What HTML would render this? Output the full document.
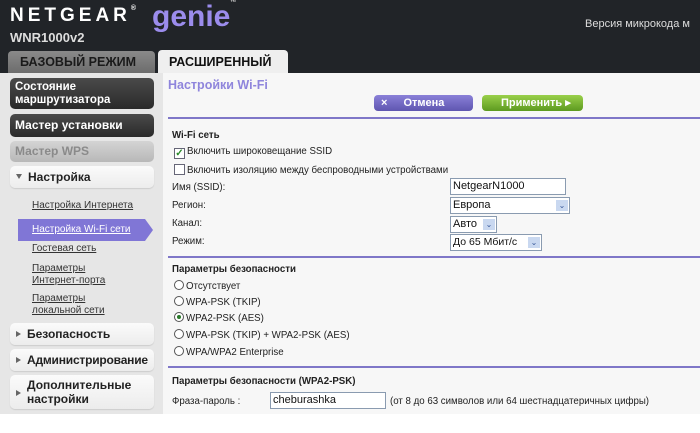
<!DOCTYPE html>
<html><head><meta charset="utf-8"><style>
*{margin:0;padding:0;box-sizing:border-box}
body{width:700px;height:433px;overflow:hidden;background:#fff;font-family:"Liberation Sans",Arial,sans-serif;position:relative}
.a{position:absolute;white-space:nowrap}
#hdr{left:0;top:0;width:700px;height:73px;background:#212428}
.sb{left:0;top:73px;width:163px;height:341px;background:#e6e6e6}
.main{left:163px;top:73px;width:537px;height:341px;background:#f7f7f7}
.db{background:linear-gradient(#4a4a4a,#2a2a2a);color:#fff;font-weight:bold;font-size:12px;border-radius:5px;left:10px;width:144px;padding-left:5px}
.lb{background:linear-gradient(#fbfbfb,#ececec);border-radius:5px;left:10px;width:144px;color:#222;font-weight:bold;font-size:12px;padding-left:6px;box-shadow:0 1px 1px #ccc}
.lk{left:32px;font-size:10px;color:#333;text-decoration:underline;line-height:12px}
.f{font-size:9.7px;color:#222}
.pl{height:2px;background:#7f77c8;left:168px;width:532px}
.inp{background:#fff;border:1px solid #8a9bb0;font-size:11px;padding-left:2px;color:#111}
.dd{position:absolute;right:1px;top:2px;width:12px;height:11px;background:#c9d8f0;color:#3a5a9a;font-size:8px;text-align:center;line-height:11px}
.rad{display:inline-block;width:10px;height:10px;border:1px solid #555;border-radius:50%;vertical-align:-1px;margin-right:2px;background:#fff;position:relative}
.tri{display:inline-block;width:0;height:0;border-left:5px solid #666;border-top:3px solid transparent;border-bottom:3px solid transparent;margin-right:6px;vertical-align:1px}
</style></head><body>
<div class="a" id="hdr"></div>
<div class="a" style="left:10px;top:5px;color:#fff;font-weight:bold;font-size:19px;letter-spacing:4px">NETGEAR<span style="font-size:7px;vertical-align:top;letter-spacing:0">®</span></div>
<div class="a" style="left:152px;top:0px;color:#9b8cec;font-weight:bold;font-size:30px">genie<span style="font-size:6px;vertical-align:top;color:#ccc">™</span></div>
<div class="a" style="left:10px;top:30px;color:#ddd;font-weight:bold;font-size:13px">WNR1000v2</div>
<div class="a" style="left:585px;top:18px;color:#ddd;font-size:11px">Версия микрокода м</div>
<div class="a" style="left:8px;top:51px;width:147px;height:22px;background:linear-gradient(#8a8a8a,#6c6c6c);border-radius:4px 4px 0 0;color:#1a1a1a;font-weight:bold;font-size:12.5px;padding:4px 0 0 12px">БАЗОВЫЙ РЕЖИМ</div>
<div class="a" style="left:158px;top:50px;width:130px;height:23px;background:#efefef;border-radius:4px 4px 0 0;color:#111;font-weight:bold;font-size:12.5px;padding:5px 0 0 11px">РАСШИРЕННЫЙ</div>
<div class="a sb"></div>
<div class="a main"></div>
<div class="a db" style="top:78px;height:31px;line-height:13px;padding-top:3px;font-size:11.5px">Состояние<br>маршрутизатора</div>
<div class="a db" style="top:114px;height:23px;line-height:23px">Мастер установки</div>
<div class="a" style="left:10px;top:141px;width:144px;height:21px;border-radius:5px;background:linear-gradient(#d4d4d4,#b8b8b8);color:#8a8a8a;font-weight:bold;font-size:12px;line-height:21px;padding-left:5px">Мастер WPS</div>
<div class="a lb" style="top:166px;height:22px;line-height:22px"><span class="tri" style="border-left:3px solid transparent;border-right:3px solid transparent;border-top:5px solid #666;border-bottom:0;vertical-align:2px"></span>Настройка</div>
<div class="a lk" style="top:200px">Настройка Интернета</div>
<div class="a" style="left:18px;top:219px;width:127px;height:22px;background:#8076d6"></div>
<div class="a" style="left:145px;top:219px;width:0;height:0;border-left:8px solid #8076d6;border-top:11px solid transparent;border-bottom:11px solid transparent"></div>
<div class="a lk" style="top:224px;color:#fff">Настройка Wi-Fi сети</div>
<div class="a lk" style="top:243px">Гостевая сеть</div>
<div class="a lk" style="top:263px">Параметры<br>Интернет-порта</div>
<div class="a lk" style="top:293px">Параметры<br>локальной сети</div>
<div class="a lb" style="top:323px;height:22px;line-height:22px"><span class="tri"></span>Безопасность</div>
<div class="a lb" style="top:349px;height:22px;line-height:22px;letter-spacing:-0.2px"><span class="tri"></span>Администрирование</div>
<div class="a lb" style="top:375px;height:34px;line-height:14px;padding-top:3px"><span class="tri" style="position:absolute;left:6px;top:15px"></span><div style="padding-left:11px">Дополнительные<br>настройки</div></div>

<div class="a" style="left:168px;top:78px;color:#8f85dc;font-weight:bold;font-size:12.5px">Настройки Wi-Fi</div>
<div class="a" style="left:374px;top:95px;width:99px;height:16px;border-radius:4px;background:linear-gradient(#8a80d8,#5f56b0);color:#fff;font-weight:bold;font-size:11px;line-height:16px;padding-left:7px">×<span style="margin-left:16px">Отмена</span></div>
<div class="a" style="left:482px;top:95px;width:101px;height:16px;border-radius:4px;background:linear-gradient(#9ad04a,#5d9a20);color:#fff;font-weight:bold;font-size:11px;line-height:16px;padding-left:19px">Применить ▸</div>
<div class="a pl" style="top:117px"></div>
<div class="a f" style="left:172px;top:130px;font-weight:bold">Wi-Fi сеть</div>
<div class="a f" style="left:174px;top:146px"><span style="display:inline-block;width:11px;height:11px;border:1px solid #667;background:#fff;vertical-align:-2px;margin-right:2px;color:#2a8a2a;font-size:10px;line-height:9px;text-align:center;font-weight:bold">✓</span>Включить широковещание SSID</div>
<div class="a f" style="left:174px;top:164px"><span style="display:inline-block;width:11px;height:11px;border:1px solid #667;background:#fff;vertical-align:-2px;margin-right:2px"></span>Включить изоляцию между беспроводными устройствами</div>
<div class="a f" style="left:172px;top:182px">Имя (SSID):</div>
<div class="a f" style="left:172px;top:200px">Регион:</div>
<div class="a f" style="left:172px;top:218px">Канал:</div>
<div class="a f" style="left:172px;top:236px">Режим:</div>
<div class="a inp" style="left:450px;top:178px;width:116px;height:17px;line-height:15px">NetgearN1000</div>
<div class="a inp" style="left:450px;top:197px;width:120px;height:17px;line-height:15px">Европа<span class="dd">⌄</span></div>
<div class="a inp" style="left:450px;top:216px;width:47px;height:17px;line-height:15px">Авто<span class="dd">⌄</span></div>
<div class="a inp" style="left:450px;top:234px;width:92px;height:17px;line-height:15px;font-size:10.5px">До 65 Мбит/с<span class="dd">⌄</span></div>
<div class="a pl" style="top:256px"></div>
<div class="a f" style="left:172px;top:264px;font-weight:bold">Параметры безопасности</div>
<div class="a f" style="left:174px;top:280px"><span class="rad"></span>Отсутствует</div>
<div class="a f" style="left:174px;top:296px"><span class="rad"></span>WPA-PSK (TKIP)</div>
<div class="a f" style="left:174px;top:312px"><span class="rad"><span style="position:absolute;left:2px;top:2px;width:4px;height:4px;border-radius:50%;background:#2a7a2a"></span></span>WPA2-PSK (AES)</div>
<div class="a f" style="left:174px;top:329px"><span class="rad"></span>WPA-PSK (TKIP) + WPA2-PSK (AES)</div>
<div class="a f" style="left:174px;top:346px"><span class="rad"></span>WPA/WPA2 Enterprise</div>
<div class="a pl" style="top:366px"></div>
<div class="a f" style="left:172px;top:376px;font-weight:bold">Параметры безопасности (WPA2-PSK)</div>
<div class="a f" style="left:172px;top:396px">Фраза-пароль :</div>
<div class="a inp" style="left:270px;top:392px;width:116px;height:17px;line-height:15px">cheburashka</div>
<div class="a f" style="left:390px;top:396px">(от 8 до 63 символов или 64 шестнадцатеричных цифры)</div>
</body></html>
